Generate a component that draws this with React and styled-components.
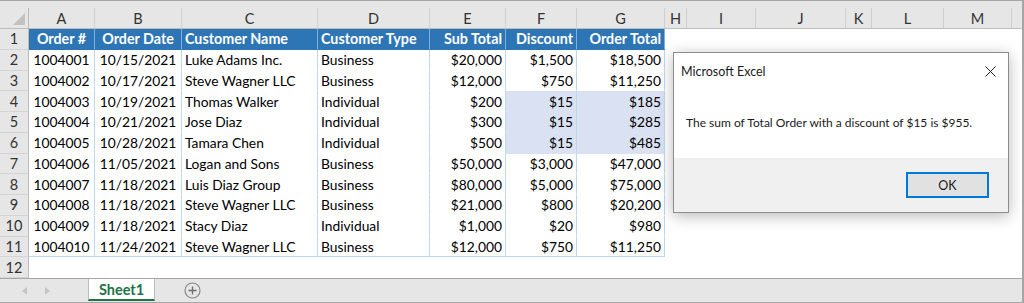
import styled, { createGlobalStyle } from 'styled-components';

const Global = createGlobalStyle`
  html, body { margin:0; padding:0; background:#fff; }
  * { box-sizing:border-box; }
`;

const COLS = [29, 66, 87, 136, 112, 76, 71, 88, 22, 69, 90, 26, 72, 68];
const LETTERS = ['A','B','C','D','E','F','G','H','I','J','K','L','M'];
const ALIGN = ['center','center','left','left','right','right','right'];

const HEAD = ['Order #','Order Date','Customer Name','Customer Type','Sub Total','Discount','Order Total'];
const ROWS = [
  ['1004001','10/15/2021','Luke Adams Inc.','Business','$20,000','$1,500','$18,500'],
  ['1004002','10/17/2021','Steve Wagner LLC','Business','$12,000','$750','$11,250'],
  ['1004003','10/19/2021','Thomas Walker','Individual','$200','$15','$185'],
  ['1004004','10/21/2021','Jose Diaz','Individual','$300','$15','$285'],
  ['1004005','10/28/2021','Tamara Chen','Individual','$500','$15','$485'],
  ['1004006','11/05/2021','Logan and Sons','Business','$50,000','$3,000','$47,000'],
  ['1004007','11/18/2021','Luis Diaz Group','Business','$80,000','$5,000','$75,000'],
  ['1004008','11/18/2021','Steve Wagner LLC','Business','$21,000','$800','$20,200'],
  ['1004009','11/18/2021','Stacy Diaz','Individual','$1,000','$20','$980'],
  ['1004010','11/24/2021','Steve Wagner LLC','Business','$12,000','$750','$11,250'],
];

//----------------------WINDOW-----------------
const Window = styled.div`
  position:relative;
  display:flex;
  flex-direction:column;
  width:1024px;
  height:303px;
  border-top:1px solid #a6a6a6;
  border-right:2px solid #a6a6a6;
  font-family:Lato, "Liberation Sans", sans-serif;
  overflow:hidden;
`;

const TopStrip = styled.div`
  height:7px;
  background:#e6e6e6;
`;

//----------------------GRID-----------------
const Sheet = styled.div`
  display:grid;
  grid-template-columns:${COLS.map(c => c + 'px').join(' ')} 1fr;
  grid-template-rows:21px repeat(12, 20.75px);
`;

const Corner = styled.div`
  position:relative;
  background:#e6e6e6;
  border-right:1px solid #bdbdbd;
  border-bottom:1px solid #bdbdbd;
  &::after{
    content:'';
    position:absolute;
    right:3px;
    bottom:3px;
    border-style:solid;
    border-width:0 0 12px 12px;
    border-color:transparent transparent #c2c2c2 transparent;
  }
`;

const ColHead = styled.div`
  display:flex;
  align-items:center;
  justify-content:center;
  background:#e6e6e6;
  border-right:1px solid ${p => p.$last ? 'transparent' : '#cfcfcf'};
  border-bottom:1px solid #bdbdbd;
  color:#333;
  font-size:14.5px;
  padding-top:1px;
`;

const RowHead = styled.div`
  display:flex;
  align-items:center;
  justify-content:center;
  background:#e6e6e6;
  border-right:1px solid #bdbdbd;
  border-bottom:1px solid #d4d4d4;
  color:#333;
  font-size:14.5px;
`;

const Cell = styled.div`
  display:flex;
  align-items:center;
  justify-content:${p => p.$align === 'right' ? 'flex-end' : p.$align === 'center' ? 'center' : 'flex-start'};
  padding:0 3px;
  white-space:nowrap;
  overflow:hidden;
  font-size:${p => p.$head ? '14.3px' : '13.8px'};
  color:${p => p.$head ? '#fff' : '#000'};
  font-weight:${p => p.$head ? 700 : 400};
  background:${p => p.$head ? '#2e75b6' : p.$hl ? '#d9e1f2' : '#fff'};
  border-right:1px solid ${p => p.$head ? '#7fafdc' : p.$tbl ? '#bdd7ee' : 'transparent'};
  border-bottom:1px solid ${p => p.$bottom ? '#bdd7ee' : 'transparent'};
`;

//----------------------TAB BAR-----------------
const TabBar = styled.div`
  flex:1;
  display:flex;
  align-items:stretch;
  background:#e6e6e6;
  border-top:1px solid #a6a6a6;
  border-bottom:1px solid #a6a6a6;
`;

const Arrows = styled.div`
  display:flex;
  align-items:center;
  gap:18px;
  padding-left:22px;
  width:88px;
`;

const Arrow = styled.span`
  width:0;
  height:0;
  border-top:4px solid transparent;
  border-bottom:4px solid transparent;
  ${p => p.$dir === 'left' ? 'border-right:5px solid #c4c4c4;' : 'border-left:5px solid #c4c4c4;'}
`;

const Tab = styled.div`
  display:flex;
  align-items:center;
  justify-content:center;
  width:67px;
  margin-bottom:1px;
  background:#fff;
  border-left:1px solid #bdbdbd;
  border-right:1px solid #bdbdbd;
  border-bottom:2px solid #217346;
  color:#217346;
  font-weight:700;
  font-size:14.5px;
`;

const AddBtn = styled.div`
  display:flex;
  align-items:center;
  margin-left:29px;
`;

//----------------------DIALOG-----------------
const Dialog = styled.div`
  position:absolute;
  left:673px;
  top:51px;
  width:336px;
  height:161px;
  display:flex;
  flex-direction:column;
  background:#fff;
  border:1px solid #8c8c8c;
  box-shadow:0 3px 14px rgba(0,0,0,0.28);
  font-family:Lato, "Liberation Sans", sans-serif;
  color:#1a1a1a;
`;

const TitleRow = styled.div`
  display:flex;
  align-items:center;
  justify-content:space-between;
  height:36px;
  padding:0 12px 0 7px;
  font-size:12.5px;
`;

const Message = styled.div`
  flex:1;
  display:flex;
  align-items:center;
  padding:0 0 2px 12px;
  font-size:12px;
`;

const Footer = styled.div`
  height:54px;
  display:flex;
  justify-content:flex-end;
  align-items:flex-start;
  padding:14px 19px 0 0;
  background:#f0f0f0;
`;

const OkButton = styled.div`
  width:83px;
  height:26px;
  display:flex;
  align-items:center;
  justify-content:center;
  background:#e1e1e1;
  border:2px solid #0078d7;
  font-size:12.5px;
  color:#1a1a1a;
`;

const App = () => {
  const cells = [];
  cells.push(<Corner key="corner" />);
  LETTERS.forEach(l => cells.push(<ColHead key={'h' + l}>{l}</ColHead>));
  cells.push(<ColHead key="hlast" $last />);

  for (let r = 1; r <= 12; r++) {
    cells.push(<RowHead key={'r' + r}>{r}</RowHead>);
    for (let c = 0; c < 14; c++) {
      const inTable = c < 7 && r <= 11;
      let text = '';
      if (inTable) text = r === 1 ? HEAD[c] : ROWS[r - 2][c];
      cells.push(
        <Cell
          key={r + '-' + c}
          $align={inTable ? ALIGN[c] : 'left'}
          $head={inTable && r === 1}
          $tbl={inTable}
          $bottom={inTable && r === 11}
          $hl={inTable && r >= 4 && r <= 6 && (c === 5 || c === 6)}
        >
          {text}
        </Cell>
      );
    }
  }

  return <>
    <Global />
    <Window>
      <TopStrip />
      <Sheet>{cells}</Sheet>

      <TabBar>
        <Arrows>
          <Arrow $dir="left" />
          <Arrow $dir="right" />
        </Arrows>
        <Tab>Sheet1</Tab>
        <AddBtn>
          <svg width="17" height="17" viewBox="0 0 17 17">
            <circle cx="8.5" cy="8.5" r="7.5" fill="none" stroke="#8a8a8a" strokeWidth="1.2" />
            <path d="M8.5 4.5v8M4.5 8.5h8" stroke="#6e6e6e" strokeWidth="1.3" />
          </svg>
        </AddBtn>
      </TabBar>

      <Dialog>
        <TitleRow>
          <span>Microsoft Excel</span>
          <svg width="11" height="11" viewBox="0 0 11 11">
            <path d="M0.5 0.5l10 10M10.5 0.5l-10 10" stroke="#222" strokeWidth="1" />
          </svg>
        </TitleRow>
        <Message>The sum of Total Order with a discount of $15 is $955.</Message>
        <Footer>
          <OkButton>OK</OkButton>
        </Footer>
      </Dialog>
    </Window>
  </>;
};

export default App;
